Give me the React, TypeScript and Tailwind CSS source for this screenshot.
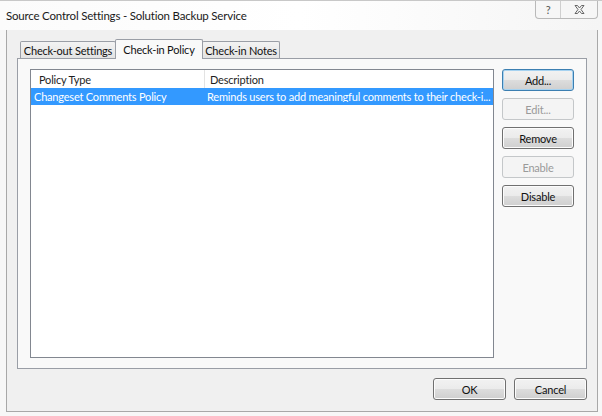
import React from "react";

const font = { fontFamily: 'Lato, "Open Sans", "Noto Sans", sans-serif' };

interface BtnProps {
    label: string;
    disabled?: boolean;
    focused?: boolean;
    wide?: boolean;
}

const WinButton: React.FC<BtnProps> = ({ label, disabled, focused, wide }) => {
    if (disabled) {
        return (
            <div className={`${wide ? "w-[73px]" : "w-[72px]"} h-[22px] flex items-center justify-center rounded-[3px] border border-[#c4c7c9] bg-[#f4f4f4] text-[#9a9a9a]`}>
                {label}
            </div>
        );
    }
    return (
        <div
            className={`${wide ? "w-[73px]" : "w-[72px]"} h-[22px] flex items-center justify-center rounded-[3px] border ${
                focused ? "border-[#3c7fb1] shadow-[inset_0_0_0_1px_#a6d2f0]" : "border-[#707070] shadow-[inset_0_0_0_1px_#fcfcfc]"
            } bg-[linear-gradient(#f2f2f2_0%,#ebebeb_50%,#dddddd_51%,#cfcfcf_100%)] text-[#111]`}
        >
            {label}
        </div>
    );
};

export default function App() {
    return (
        <div className="w-[602px] h-[416px] bg-[#f7f7f7] flex flex-col text-[11px] tracking-[-0.2px] leading-none overflow-hidden whitespace-nowrap" style={font}>
            {/* title bar */}
            <div className="h-[30px] flex items-start justify-between bg-[linear-gradient(90deg,#fbfbfb,#ffffff_50%,#f5f5f5)] border-t border-[#c8c8c8]">
                <span className="pl-[6px] pt-[9px] text-[11.5px] text-[#1a1a1a]">Source Control Settings - Solution Backup Service</span>
                <div className="flex mr-[4px] h-[18px] border border-t-0 border-[#b9b9b9] rounded-b-[4px] bg-[#f6f6f6]">
                    <div className="w-[25px] flex items-center justify-center border-r border-[#cfcfcf] text-[#555] text-[11px]">?</div>
                    <div className="w-[36px] flex items-center justify-center">
                        <svg width="11" height="9" viewBox="0 0 11 9" fill="none" stroke="#666" strokeWidth="1">
                            <path d="M1 0.5 L3.5 0.5 L5.5 3 L7.5 0.5 L10 0.5 L7 4.5 L10 8.5 L7.5 8.5 L5.5 6 L3.5 8.5 L1 8.5 L4 4.5 Z" />
                        </svg>
                    </div>
                </div>
            </div>

            {/* client area */}
            <div className="flex-1 ml-[6px] mr-[4px] mb-[4px] border-l border-b border-r border-[#a8a8a8] bg-[#f0f0f0] flex flex-col px-[10px] pt-[8px]">
                {/* tabs */}
                <div className="flex items-end h-[20px] pl-[3px] relative z-10">
                    <div className="w-[96px] shrink-0 h-[17px] flex items-center justify-center border border-b-0 border-[#9a9ea6] rounded-t-[2px] bg-[linear-gradient(#f3f3f3,#e3e3e3)] text-[#111]">
                        Check-out Settings
                    </div>
                    <div className="w-[88px] shrink-0 h-[20px] -mb-px flex items-center justify-center border border-b-0 border-[#9a9ea6] rounded-t-[2px] bg-[#f9f9f9] text-[#111] -mx-px">
                        Check-in Policy
                    </div>
                    <div className="w-[78px] shrink-0 h-[17px] flex items-center justify-center border border-b-0 border-[#9a9ea6] rounded-t-[2px] bg-[linear-gradient(#f3f3f3,#e3e3e3)] text-[#111]">
                        Check-in Notes
                    </div>
                </div>

                {/* tab panel */}
                <div className="h-[311px] border border-[#9a9ea6] bg-[#f9f9f9] flex pl-[12px] pr-[12px] pt-[10px] pb-[10px] gap-[8px]">
                    <div className="w-[464px] min-w-0 overflow-hidden border border-[#828790] bg-white flex flex-col">
                        <div className="h-[18px] flex items-center text-[#1e1e1e]">
                            <div className="w-[174px] h-full flex items-center pl-[8px] border-r border-[#e3e3e3]">Policy Type</div>
                            <div className="flex-1 pl-[5px]">Description</div>
                        </div>
                        <div className="h-[17px] flex items-center bg-[#3399ff] text-white">
                            <div className="w-[174px] shrink-0 pl-[3px]">Changeset Comments Policy</div>
                            <div className="flex-1 min-w-0 overflow-hidden pl-[2px]">Reminds users to add meaningful comments to their check-i...</div>
                        </div>
                    </div>
                    <div className="flex flex-col gap-[7px]">
                        <WinButton label="Add..." focused />
                        <WinButton label="Edit..." disabled />
                        <WinButton label="Remove" />
                        <WinButton label="Enable" disabled />
                        <WinButton label="Disable" />
                    </div>
                </div>

                {/* bottom buttons */}
                <div className="flex justify-end gap-[8px] pt-[9px]">
                    <WinButton label="OK" wide />
                    <WinButton label="Cancel" wide />
                </div>
            </div>
        </div>
    );
}
